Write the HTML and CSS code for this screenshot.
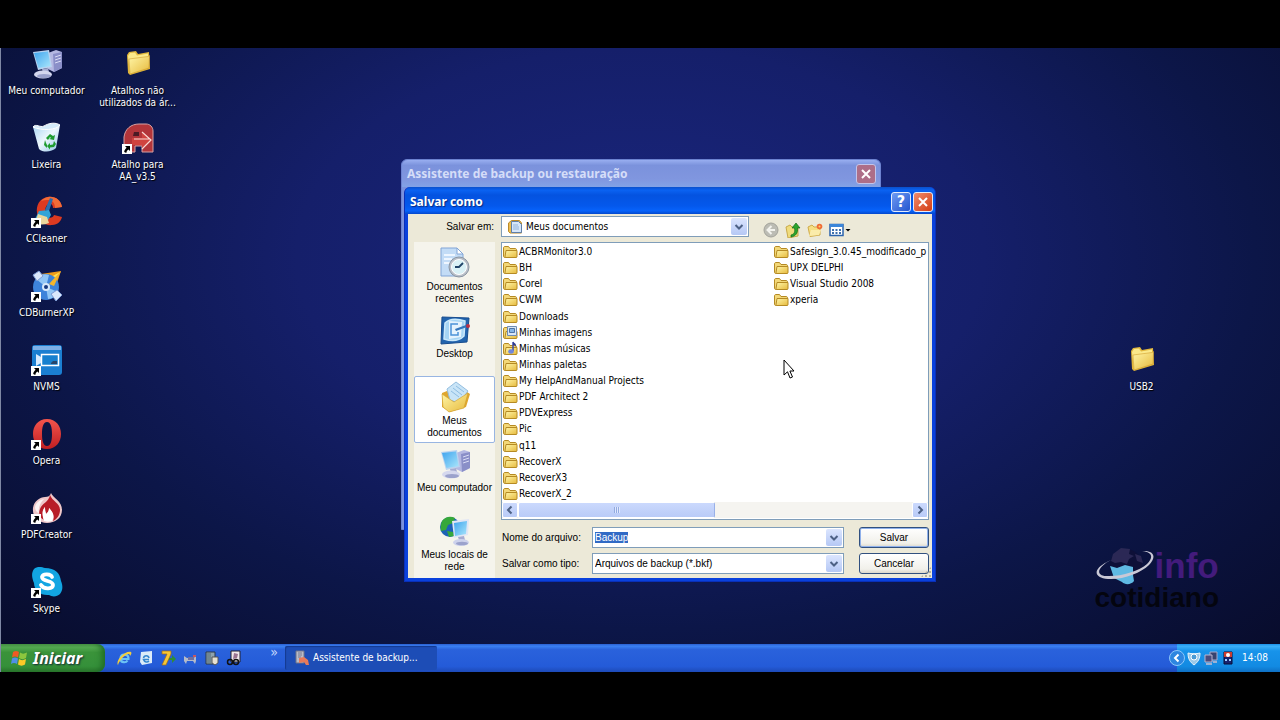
FILE: index.html
```html
<!DOCTYPE html>
<html lang="pt-BR">
<head>
    <meta charset="UTF-8">
    <meta name="viewport" content="width=device-width, initial-scale=1.0">
    <title>Salvar como</title>
    <link rel="stylesheet" href="styles.css">
</head>
<body>
    <svg class="sprite" aria-hidden="true">
        <defs>
            <linearGradient id="gFolder" x1="0" y1="0" x2="1" y2="1">
                <stop offset="0" stop-color="#fff6a8"/>
                <stop offset="1" stop-color="#e6b93c"/>
            </linearGradient>
            <linearGradient id="gScreen" x1="0" y1="0" x2="1" y2="1">
                <stop offset="0" stop-color="#3fa4ee"/>
                <stop offset="1" stop-color="#a9e6fb"/>
            </linearGradient>
            <linearGradient id="gRed" x1="0" y1="0" x2="0" y2="1">
                <stop offset="0" stop-color="#f4554d"/>
                <stop offset="1" stop-color="#c01f22"/>
            </linearGradient>
            <linearGradient id="gBin" x1="0" y1="0" x2="1" y2="1">
                <stop offset="0" stop-color="#a9d5f2"/>
                <stop offset="0.5" stop-color="#eef8fd"/>
                <stop offset="1" stop-color="#8cc0e6"/>
            </linearGradient>
        </defs>

        <symbol id="shortcut" viewBox="0 0 10 10">
            <path d="M0 0h10v10H0z" fill="#fff"/>
            <path d="M3 2h5v5L6.400 5.500C5 6.500 4.500 7.500 4.300 9L2.200 8C2.300 6.300 3.200 5 4.600 3.700z" fill="#000"/>
        </symbol>

        <symbol id="computer" viewBox="0 0 32 32">
            <path d="M17 5l8-3 6 2v16l-8 4-6-3z" fill="#b4b8e2"/>
            <path d="M22 6l9-2v16l-8 4z" fill="#8a8fc8"/>
            <path d="M24 9l6-2M24 12l6-2M24 15l6-2" stroke="#d9dcf5"/>
            <path d="M2 4l16-2 3 17-14 3z" fill="#b9d3f0"/>
            <path d="M3 5l14-1.500 2.500 14.500-12 2z" fill="url(#gScreen)"/>
            <path d="M11 21l6-1 1 4-6 1z" fill="#a6abd1"/>
            <ellipse cx="12" cy="26.500" rx="9" ry="4" fill="#d5d8ee"/>
            <ellipse cx="13" cy="28" rx="7" ry="2" fill="#9ba2cc"/>
        </symbol>

        <symbol id="folder-big" viewBox="0 0 32 32">
            <path d="M5 7l2-3 7-1 2 3 11-2 1 17-20 6-2-2z" fill="#e0b63b"/>
            <path d="M6 8l2-3 5-.500 2 3 11-2v14L8 25z" fill="#fbe98a"/>
            <path d="M7 11l19-2.500 1.500-1-.500 12.500L8 26z" fill="url(#gFolder)" stroke="#d1a02f" stroke-width=".6"/>
        </symbol>

        <symbol id="bin" viewBox="0 0 32 32">
            <path d="M2 5l11 2 16-4-4 23c-4 4-13 5-17 1z" fill="url(#gBin)"/>
            <path d="M2 5c3-4 7 1 11-1 5-3 11-4 16-1-3 5-18 6-27 2z" fill="#d5ecfa" stroke="#fff" stroke-width="1"/>
            <path d="M15 16l4-4 3 2 2-1-1 5-5-1 2-1-1-1-2 3zM23 19l2 3-2 3-4 .500v2l-3-3.500 3-3v2l3-.500zM14 18l-1 5 3 3v-3l-1-2z" fill="#1f9c2f"/>
        </symbol>

        <symbol id="aa" viewBox="0 0 32 32">
            <path d="M2 30V15C3 7 9 2 17 2h7c4 0 7 3 7 7v21H20v-6h-7v6z" fill="#b2353a" stroke="#d7a1a3"/>
            <path d="M10 16h10v-6l10 8-10 9v-4H10z" fill="#d0433f"/>
            <path d="M12 17h16M20 10l9 8-9 9" fill="none" stroke="#f9d9d4" stroke-width="1.200"/>
            <path d="M12 10h5v4h-6z" fill="#4b1a24"/>
        </symbol>

        <symbol id="ccleaner" viewBox="0 0 32 32">
            <path d="M31 11C30 4 24 0 17 1 8 2 5 10 6 17c1 8 8 13 15 12 6 0 9-4 10-8l-8-2c-1 3-5 4-7 1-3-4-2-11 2-12 2-1 4 1 4 4z" fill="#dd3a21"/>
            <path d="M31 11C30 4 24 0 17 1c-3 .500-5 2-7 4 6-2 14-2 14 7z" fill="#f26b37"/>
            <path d="M19 2l3 1-4 12-4-1z" fill="#2c6dad"/>
            <path d="M8 15l10-1 2 5-3 5-9 3-4-4z" fill="#32a4d8"/>
            <path d="M7 18l9 3 2 6c-5 2-10 2-14 0z" fill="#ead79d"/>
        </symbol>

        <symbol id="cdburner" viewBox="0 0 32 32">
            <path d="M10 4l20-3-6 18z" fill="#ef9b1a"/>
            <path d="M18 8l11-6-7 11z" fill="#ffe054"/>
            <circle cx="15" cy="17" r="13" fill="#3d83da"/>
            <path d="M15 17L5 9c3-4 8-6 13-4zM15 17l12 5c-2 4-6 7-10 7z" fill="#91c6f5"/>
            <circle cx="15" cy="17" r="4" fill="#d8e9fa"/>
            <circle cx="15" cy="17" r="2" fill="#173a80"/>
            <path d="M2 5l6-4 4 5-6 5zM20 24l6-4 5 5-6 6z" fill="#dbe8fb" stroke="#7e9bd4"/>
            <path d="M18 14L30 1l-7 15z" fill="#f5b52c"/>
        </symbol>

        <symbol id="nvms" viewBox="0 0 32 32">
            <rect x="1" y="1" width="30" height="30" rx="3" fill="#1b7fd1"/>
            <path d="M2 2h28v4H2z" fill="#7eb0e6"/>
            <path d="M10.500 10.500h17v11h-17z" fill="#1680cf" stroke="#fff" stroke-width="1.500"/>
            <path d="M5 10l5 3v6l-5 3z" fill="#d9ecff"/>
            <path d="M20 19l2-2h4v3h-6z" fill="#27466b"/>
        </symbol>

        <symbol id="opera" viewBox="0 0 32 32">
            <path fill-rule="evenodd" d="M16 1c9 0 14 7 14 15s-5 15-14 15S2 24 2 16 7 1 16 1zm0 3c-4 0-5 6-5 12s1 12 5 12 5-6 5-12-1-12-5-12z" fill="url(#gRed)"/>
        </symbol>

        <symbol id="pdfcreator" viewBox="0 0 32 32">
            <path d="M20 1c2 5 11 8 11 17 0 8-7 13-15 13S1 25 2 16C3 9 9 5 14 5c3 0 5-1 6-4z" fill="#eec7c9"/>
            <path d="M19 3c2 6 10 8 10 15 0 5-3 9-7 11 2-6-1-9-4-13 0 3-1 4-3 6-2-4-1-6-1-7-3 3-3 7-1 13-4-2-6-6-4-11C11 11 18 10 19 3z" fill="#b81c27"/>
            <path d="M14 15c0 4 1 5 1 7 2-2 3-3 3-6 4 4 6 8 3 13-3 1-5 1-8 0-2-6-2-10 1-14z" fill="#fff"/>
            <path d="M4 15c1-4 4-7 9-8-4 4-6 9-5 14-2 0-4-3-4-6z" fill="#fbf3f3"/>
        </symbol>

        <symbol id="skype" viewBox="0 0 32 32">
            <path d="M3 3c3-3 8-2 11-1 10 0 15 5 16 13 2 5 2 9-1 13-3 3-8 3-11 1C10 30 3 24 3 17 1 12 0 7 3 3z" fill="#12a5e2"/>
            <path d="M21 11c-1-3-9-4-10 0 0 5 11 3 11 8 0 4-9 5-12 0" fill="none" stroke="#fff" stroke-width="3.800" stroke-linecap="round"/>
        </symbol>

        <symbol id="recent" viewBox="0 0 32 32">
            <path d="M2 1h16l6 6v22H2z" fill="#c3dcf6" stroke="#82a5d6"/>
            <path d="M18 1v6h6z" fill="#fff" stroke="#82a5d6"/>
            <path d="M5 8h11M5 12h8M5 16h6" stroke="#eef6ff" stroke-width="2"/>
            <circle cx="20" cy="20" r="10" fill="#b9bfc8" stroke="#8b96a2"/>
            <circle cx="20" cy="20" r="7.500" fill="#d9f1f6" stroke="#fff"/>
            <path d="M24 16l-4 4h-4" fill="none" stroke="#204468" stroke-width="1.800"/>
        </symbol>

        <symbol id="desktop" viewBox="0 0 32 32">
            <path d="M3 3l27 1-2 24-26 2z" fill="#2264ae" stroke="#174c8e"/>
            <path d="M6 9c5-5 14-4 20-2l-1 15c-6 6-14 5-20 3z" fill="#a5d4f4" stroke="#c9e8fb" stroke-width="1.500"/>
            <path d="M10 7l13 1-1 15-12 2z" fill="#e5f3fd"/>
            <path d="M19 10h-7v11h7v-3" fill="none" stroke="#4b93d8" stroke-width="1.500"/>
            <path d="M16 15l11-4 1 2-11 4z" fill="#3476bb"/>
            <circle cx="29" cy="12" r="2" fill="#ba3145"/>
        </symbol>

        <symbol id="mydocs" viewBox="0 0 32 32">
            <path d="M3 12l5-2 14-3 9 6-4 13-16 5-8-5z" fill="#dfa62e"/>
            <path d="M8 8L17 1l12 9-9 12-9-3z" fill="#c8e4f7" stroke="#93bedf"/>
            <path d="M14 7l9 7M12 10l8 6M17 5l8 6" stroke="#8ebde2"/>
            <path d="M3 13l12 8 14-9-4 15-15 4-6-5z" fill="url(#gFolder)" stroke="#d09d2a" stroke-width=".6"/>
        </symbol>

        <symbol id="network" viewBox="0 0 32 32">
            <circle cx="11" cy="12" r="10" fill="#1c62b6"/>
            <path d="M3 6c4-5 9-5 13-3l-2 5-5 2-2 5-5 1c-1-4 0-7 1-10zM8 16l6 1 1 4-5 1z" fill="#36a83a"/>
            <path d="M13 6l17-2-1 16-14 3z" fill="#e1e6f5"/>
            <path d="M15 8l13-2-1 13-11 2z" fill="url(#gScreen)"/>
            <path d="M19 22l6-1 1 4h-6z" fill="#a6abd1"/>
            <ellipse cx="22" cy="27.500" rx="8" ry="3.500" fill="#cdd2ec"/>
            <ellipse cx="23" cy="28.500" rx="6" ry="1.800" fill="#9ba2cc"/>
        </symbol>

        <symbol id="folder" viewBox="0 0 16 16">
            <path d="M.500 4c0-1 .500-1.500 1.500-1.500h3.500l1.500 2h5c1 0 1.500.500 1.500 1.500v6.500c0 .700-.500 1-1 1H2c-1 0-1.500-.500-1.500-1.500z" fill="#f3d878" stroke="#b58a24"/>
            <path d="M3 6.500h11v6c0 .700-.500 1-1 1H3c-.700 0-1-.500-1-1z" fill="url(#gFolder)" stroke="#b58a24"/>
        </symbol>

        <symbol id="folder-pictures" viewBox="0 0 16 16">
            <use href="#folder"/>
            <path d="M4.500 1.500h9v9h-9z" fill="#d8e6f6" stroke="#6f8cb4"/>
            <path d="M6.500 3.500h5v4h-5z" fill="#86b6e8" stroke="#4f74a5"/>
        </symbol>

        <symbol id="folder-music" viewBox="0 0 16 16">
            <use href="#folder"/>
            <path d="M10 1v9" stroke="#3c4ba8" stroke-width="1.500"/>
            <path d="M10 0c0 2 4 2 3 6-1-2-2-2-3-2z" fill="#2f3a8e"/>
            <ellipse cx="8" cy="10.500" rx="2.800" ry="2.200" fill="#7087dc"/>
        </symbol>

        <symbol id="docs-small" viewBox="0 0 16 16">
            <path d="M1.500 4l3-2.500h8l2 2.500v10H3l-1.500-1.500z" fill="#eebe50" stroke="#bb8a2a"/>
            <path d="M4.500 2.500h7l3 3v8h-10z" fill="#d6e6f9" stroke="#5f7fa9"/>
            <path d="M6 6h5M6 8h6M6 10h6" stroke="#93b4dc"/>
        </symbol>
    </svg>

    <main class="desktop">
        <div class="icon-grid">
            <a class="shortcut" href="#"><svg class="icon"><use href="#computer"/></svg><span>Meu computador</span></a>
            <a class="shortcut" href="#"><svg class="icon"><use href="#bin"/></svg><span>Lixeira</span></a>
            <a class="shortcut" href="#"><svg class="icon"><use href="#ccleaner"/></svg><svg class="arrow"><use href="#shortcut"/></svg><span>CCleaner</span></a>
            <a class="shortcut" href="#"><svg class="icon"><use href="#cdburner"/></svg><svg class="arrow"><use href="#shortcut"/></svg><span>CDBurnerXP</span></a>
            <a class="shortcut" href="#"><svg class="icon"><use href="#nvms"/></svg><svg class="arrow"><use href="#shortcut"/></svg><span>NVMS</span></a>
            <a class="shortcut" href="#"><svg class="icon"><use href="#opera"/></svg><svg class="arrow"><use href="#shortcut"/></svg><span>Opera</span></a>
            <a class="shortcut" href="#"><svg class="icon"><use href="#pdfcreator"/></svg><svg class="arrow"><use href="#shortcut"/></svg><span>PDFCreator</span></a>
            <a class="shortcut" href="#"><svg class="icon"><use href="#skype"/></svg><svg class="arrow"><use href="#shortcut"/></svg><span>Skype</span></a>
            <a class="shortcut" href="#"><svg class="icon"><use href="#folder-big"/></svg><span>Atalhos não<br>utilizados da ár...</span></a>
            <a class="shortcut" href="#"><svg class="icon"><use href="#aa"/></svg><svg class="arrow"><use href="#shortcut"/></svg><span>Atalho para<br>AA_v3.5</span></a>
        </div>

        <a class="shortcut usb" href="#"><svg class="icon"><use href="#folder-big"/></svg><span>USB2</span></a>

        <section class="window wizard">
            <header class="titlebar">
                <h2>Assistente de backup ou restauração</h2>
                <button class="win-btn close" aria-label="Fechar assistente"><svg viewBox="0 0 18 18"><path d="M5 5l8 8M13 5l-8 8"/></svg></button>
            </header>
        </section>

        <section class="window dialog">
            <header class="titlebar">
                <h1>Salvar como</h1>
                <button class="win-btn help" aria-label="Ajuda">?</button>
                <button class="win-btn close" aria-label="Fechar"><svg viewBox="0 0 18 18"><path d="M5 5l8 8M13 5l-8 8"/></svg></button>
            </header>
            <form class="dialog-body" onsubmit="return false">
                <div class="look-in">
                    <label for="folderSelect">Salvar em:</label>
                    <div class="combo combo-folder">
                        <svg class="combo-icon"><use href="#docs-small"/></svg>
                        <select id="folderSelect"><option>Meus documentos</option></select>
                        <span class="combo-arrow"><svg viewBox="0 0 10 10"><path d="M1.500 3L5 6.500 8.500 3"/></svg></span>
                    </div>
                    <div class="tools">
                        <button type="button" aria-label="Voltar"><svg viewBox="0 0 16 16"><circle cx="8" cy="8" r="7" fill="#bcbcb4" stroke="#a3a39b"/><path d="M8.500 4L4.500 8l4 4M5 8h7" fill="none" stroke="#f3f3ee" stroke-width="2"/></svg></button>
                        <button type="button" aria-label="Um nível acima"><svg viewBox="0 0 16 16"><path d="M1 5l4-2 2 2h6v9l-10 2z" fill="#f0dc7c" stroke="#c8a94a"/><path d="M6 13c4-1 4-4 3.500-7H7l4-5 4 5h-2.500c.500 5-1.500 8-6.500 9z" fill="#2ba52d" stroke="#146b1c" stroke-width=".7"/></svg></button>
                        <button type="button" aria-label="Criar nova pasta"><svg viewBox="0 0 16 16"><path d="M1 5l4-2 2 2h6v8l-10 1.500z" fill="#f6df83" stroke="#cfab49"/><path d="M2 14l2-6h10l-2 5z" fill="#fbecaa"/><circle cx="12.500" cy="4.500" r="2.800" fill="#f06c35"/><circle cx="12.500" cy="4.500" r="1" fill="#ffd06a"/></svg></button>
                        <button type="button" class="views" aria-label="Menu Exibir"><svg viewBox="0 0 22 16"><path d="M1 2.500h13v11H1z" fill="#fff" stroke="#2a63ad" stroke-width="1.500"/><path d="M1 2h13v3H1z" fill="#3b86d9"/><path d="M3 8h2M6.500 8h2M10 8h2M3 11h2M6.500 11h2M10 11h2" stroke="#3e70ad" stroke-width="2"/><path d="M16.500 7h5L19 9.500z" fill="#000"/></svg></button>
                    </div>
                </div>

                <nav class="places">
                    <button type="button"><svg class="icon"><use href="#recent"/></svg><span>Documentos recentes</span></button>
                    <button type="button"><svg class="icon"><use href="#desktop"/></svg><span>Desktop</span></button>
                    <button type="button" class="active"><svg class="icon"><use href="#mydocs"/></svg><span>Meus documentos</span></button>
                    <button type="button"><svg class="icon"><use href="#computer"/></svg><span>Meu computador</span></button>
                    <button type="button"><svg class="icon"><use href="#network"/></svg><span>Meus locais de rede</span></button>
                </nav>

                <div class="file-pane">
                    <ul class="files">
                        <li><svg><use href="#folder"/></svg>ACBRMonitor3.0</li>
                        <li><svg><use href="#folder"/></svg>BH</li>
                        <li><svg><use href="#folder"/></svg>Corel</li>
                        <li><svg><use href="#folder"/></svg>CWM</li>
                        <li><svg><use href="#folder"/></svg>Downloads</li>
                        <li><svg><use href="#folder-pictures"/></svg>Minhas imagens</li>
                        <li><svg><use href="#folder-music"/></svg>Minhas músicas</li>
                        <li><svg><use href="#folder"/></svg>Minhas paletas</li>
                        <li><svg><use href="#folder"/></svg>My HelpAndManual Projects</li>
                        <li><svg><use href="#folder"/></svg>PDF Architect 2</li>
                        <li><svg><use href="#folder"/></svg>PDVExpress</li>
                        <li><svg><use href="#folder"/></svg>Pic</li>
                        <li><svg><use href="#folder"/></svg>q11</li>
                        <li><svg><use href="#folder"/></svg>RecoverX</li>
                        <li><svg><use href="#folder"/></svg>RecoverX3</li>
                        <li><svg><use href="#folder"/></svg>RecoverX_2</li>
                        <li><svg><use href="#folder"/></svg>Safesign_3.0.45_modificado_p</li>
                        <li><svg><use href="#folder"/></svg>UPX DELPHI</li>
                        <li><svg><use href="#folder"/></svg>Visual Studio 2008</li>
                        <li><svg><use href="#folder"/></svg>xperia</li>
                    </ul>
                    <div class="scrollbar">
                        <button type="button" aria-label="Rolar para a esquerda"><svg viewBox="0 0 10 10"><path d="M6.500 1.500L3 5l3.500 3.500"/></svg></button>
                        <div class="track"><div class="thumb"></div></div>
                        <button type="button" aria-label="Rolar para a direita"><svg viewBox="0 0 10 10"><path d="M3.500 1.500L7 5 3.500 8.500"/></svg></button>
                    </div>
                </div>

                <div class="fields">
                    <label for="fileName">Nome do arquivo:</label>
                    <div class="combo">
                        <input type="text" id="fileName" value="Backup" autocomplete="off" spellcheck="false">
                        <span class="combo-arrow"><svg viewBox="0 0 10 10"><path d="M1.500 3L5 6.500 8.500 3"/></svg></span>
                    </div>
                    <button type="submit" class="btn btn-default">Salvar</button>
                    <label for="fileType">Salvar como tipo:</label>
                    <div class="combo">
                        <select id="fileType"><option>Arquivos de backup (*.bkf)</option></select>
                        <span class="combo-arrow"><svg viewBox="0 0 10 10"><path d="M1.500 3L5 6.500 8.500 3"/></svg></span>
                    </div>
                    <button type="button" class="btn">Cancelar</button>
                </div>
                <span class="grip"></span>
            </form>
        </section>

        <svg class="cursor" viewBox="0 0 12 20"><path d="M1 1v15l3.500-3.200L7 19l2.500-1-2.600-6H11z" fill="#fff" stroke="#000"/></svg>

        <div class="watermark">
            <div class="wm-top">
                <svg viewBox="0 0 60 40">
                    <circle cx="31" cy="19" r="16" fill="#0e1038"/>
                    <path d="M18 8l8-6 9 1-1 5 5 2-5 3-2 5-6-2-6 1-4-2zM40 8l6 2 2 7-6-2z" fill="#2b2855"/>
                    <path d="M15 20l7 2 8-3 8 2v8l1 6c-3 4-9 4-12 1l-8-4z" fill="#5fb9e3"/>
                    <path d="M47 5c12-1 15 6 7 14S28 34 13 33C-2 32-2 23 12 16l4-2C4 20-1 29 11 30c14 1 33-5 41-12 7-7 5-12-5-13z" fill="#c9c8d6"/>
                </svg>
                <span>info</span>
            </div>
            <div class="wm-bottom">cotidiano</div>
        </div>
    </main>

    <footer class="taskbar">
        <button class="start">
            <svg viewBox="0 0 20 18"><path d="M3 3c2-1.500 4-1.500 6 0L8 8.500c-2-1.500-4-1.500-6 0z" fill="#ef5a24"/><path d="M10 3.500c2 1.500 4 1.500 7 0L16 9c-2 1.500-5 1.500-7 0z" fill="#8cc63e"/><path d="M2 9.500c2-1.500 4-1.500 6 0L7 15c-2-1.500-4-1.500-6 0z" fill="#4f8fe8"/><path d="M9 10c2 1.500 4 1.500 7 0l-1 5.500c-2 1.500-5 1.500-7 0z" fill="#fbc927"/></svg>
            Iniciar
        </button>
        <div class="quick-launch">
            <button aria-label="Internet Explorer"><svg viewBox="0 0 16 16"><path d="M13.500 9H4.500c.500 4 5.500 4 7 1.500" fill="none" stroke="#6cc3f5" stroke-width="2.200"/><path d="M4.500 8C5 3.500 12 3.500 12.500 8" fill="none" stroke="#6cc3f5" stroke-width="2.200"/><path d="M2 15C-1 11 9 0 15 2c1 1 0 3-1 4 0-6-10 2-12 9z" fill="#f4ce3d"/></svg></button>
            <button aria-label="Outlook Express"><svg viewBox="0 0 16 16"><path d="M3 2l11-1v12L4 15l-2-3z" fill="#dcecf8"/><path d="M11 9.500H5.500c1 3 4 3 5.500 1.500M5.500 8c.500-3 5-3 5.500 0" fill="none" stroke="#3687cf" stroke-width="1.600"/></svg></button>
            <button aria-label="7"><svg viewBox="0 0 16 16"><path d="M2 1h9v3L6 15H2L7 4H2z" fill="#f5c637" stroke="#a36a12" stroke-width=".7"/><path d="M9 8h3V5l4 4-4 4v-3H9z" fill="#2f8c3a"/></svg></button>
            <button aria-label="Rede"><svg viewBox="0 0 16 16"><path d="M2 6l3 2h7l2-3v6l-1 3-2-3H5l-1 3-2-3z" fill="#b4bac9"/><path d="M6 7h6v3H6z" fill="#6f6fa0"/><path d="M11 5h3v2h-3z" fill="#c65760"/></svg></button>
            <button aria-label="Documento"><svg viewBox="0 0 16 16"><path d="M2 2h9v12H2z" fill="#8fa3ad" stroke="#2c3a4b"/><path d="M4 3v10M6 3v10" stroke="#546a75"/><path d="M8 7h6v6l-3 2-3-2z" fill="#e6e1d2" stroke="#555"/></svg></button>
            <button aria-label="Captura"><svg viewBox="0 0 16 16"><path d="M5 1h9v11H5z" fill="#f1e9ea" stroke="#23202e"/><path d="M8 3l4 1-1 4-4 1z" fill="#9a7490"/><circle cx="4" cy="12" r="2.500" fill="none" stroke="#111" stroke-width="1.500"/><circle cx="10" cy="12" r="2.500" fill="none" stroke="#111" stroke-width="1.500"/></svg></button>
            <span class="more">»</span>
        </div>
        <button class="task">
            <svg viewBox="0 0 16 16"><path d="M2 1h8v12H2z" fill="#b9bbc6" stroke="#6d7288"/><path d="M4 3h4M4 5h4M4 7h3" stroke="#767b92"/><path d="M5 8l5-1 4 3 1 5h-3l-2-3-5 1z" fill="#e67a5b"/></svg>
            <span>Assistente de backup...</span>
        </button>
        <div class="tray">
            <button class="tray-toggle" aria-label="Mostrar ícones ocultos"><svg viewBox="0 0 16 16"><circle cx="8" cy="8" r="7.500" fill="#2d86e0" stroke="#8cc7fa"/><path d="M9.500 4.500L6 8l3.500 3.500" fill="none" stroke="#fff" stroke-width="2"/></svg></button>
            <svg viewBox="0 0 16 16"><path d="M2 3c4 1 8 1 12 0 0 6-2 9-6 12-4-3-6-6-6-12z" fill="#9cc9e8" stroke="#e7f4fb"/><circle cx="8" cy="7" r="3" fill="#4a9bd5" stroke="#fff"/></svg>
            <svg viewBox="0 0 16 16"><path d="M7 2h7v8H7z" fill="#38436e" stroke="#a9a9c9"/><path d="M2 5h7v7H2z" fill="#4a4c7d" stroke="#b8b5cf"/><path d="M3 14h6M10 12h4" stroke="#c8bfd0" stroke-width="1.500"/></svg>
            <svg viewBox="0 0 16 16"><path d="M4 2h8v12H4z" fill="#18226f" stroke="#0a0d35"/><path d="M4 2h8v5H4z" fill="#c83c2e"/><circle cx="8" cy="5" r="2" fill="#fff"/><path d="M5 10h2M9 10h2" stroke="#9fd0ff" stroke-width="2"/></svg>
            <time>14:08</time>
        </div>
    </footer>

    <script>
        // o nome sugerido abre selecionado
        const fileName = document.getElementById('fileName');
        fileName.focus();
        fileName.select();
    </script>
</body>
</html>
```
FILE: styles.css
```css
* {
    margin: 0;
    padding: 0;
    box-sizing: border-box;
}

body {
    font-family: Tahoma, 'DejaVu Sans Condensed', sans-serif;
    font-size: 10px;
    line-height: 12px;
    background: #000;
    min-height: 100vh;
    padding: 48px 0;
    display: flex;
    flex-direction: column;
    overflow: hidden;
}

button,
input,
select {
    font: inherit;
    color: inherit;
    border: none;
    background: none;
    outline: none;
}

.sprite {
    position: absolute;
    width: 0;
    height: 0;
}

/* area de trabalho */
.desktop {
    flex: 1;
    position: relative;
    border-left: 1px solid #7f88a4;
    background: radial-gradient(ellipse at 50% 35%, #1a267e 0%, #151f6a 38%, #0c1648 68%, #080c2c 100%);
}

.icon-grid {
    display: grid;
    grid-auto-flow: column;
    grid-template-rows: repeat(8, 74px);
    grid-auto-columns: 91px;
    justify-content: start;
}

.shortcut {
    position: relative;
    display: flex;
    flex-direction: column;
    align-items: center;
    gap: 5px;
    color: #fff;
    text-align: center;
    text-decoration: none;
    text-shadow: 1px 1px 1px #000;
}

.icon {
    width: 32px;
    height: 32px;
}

.arrow {
    position: absolute;
    left: 30px;
    top: 22px;
    width: 10px;
    height: 10px;
}

.usb {
    position: absolute;
    right: 93px;
    top: 296px;
    width: 91px;
}

/* janelas */
.window {
    position: absolute;
    display: flex;
    flex-direction: column;
    border-radius: 6px 6px 0 0;
}

.wizard {
    left: 400px;
    top: 111px;
    width: 480px;
    height: 371px;
    background: #7b91dd;
    border: 1px solid #6c82d0;
}

.dialog {
    left: 403px;
    top: 139px;
    width: 532px;
    height: 395px;
    padding: 0 3px 3px;
    background: #0a41dc;
    border: 1px solid #0a30b8;
    border-top: none;
}

.titlebar {
    display: flex;
    align-items: center;
    gap: 2px;
    height: 27px;
    padding: 2px 4px 2px 5px;
    border-radius: 6px 6px 0 0;
    color: #fff;
}

.wizard .titlebar {
    background: linear-gradient(#98aef0, #7b92dc 20%, #8096df 70%, #82a2e6);
    color: #d5ddf8;
}

.dialog .titlebar {
    margin: 0 -3px;
    background: linear-gradient(#0a50cc, #0a62f2 12%, #0453e0 30%, #0458ec 70%, #0763fb 88%, #0448cc);
    padding: 5px 2px 2px 5px;
    text-shadow: 1px 1px 1px #0a2a80;
}

.titlebar h1,
.titlebar h2 {
    flex: 1;
    font-family: 'Trebuchet MS', 'Noto Sans', sans-serif;
    font-size: 12px;
    line-height: 16px;
    font-weight: bold;
}

.win-btn {
    width: 20px;
    height: 20px;
    border: 1px solid #e3ebfb;
    border-radius: 3px;
    background: linear-gradient(135deg, #6f9bf3, #2455cf);
    color: #fff;
    font-size: 16px;
    line-height: 18px;
    font-weight: bold;
}

.win-btn svg {
    display: block;
    width: 18px;
    height: 18px;
    fill: none;
    stroke: #fff;
    stroke-width: 2;
}

.close {
    background: linear-gradient(135deg, #f08b6c, #d33d14);
}

.wizard .close {
    background: #ad6e88;
    border-color: #c2c4ea;
}

/* corpo do dialogo */
.dialog-body {
    flex: 1;
    position: relative;
    display: grid;
    grid-template-columns: 81px minmax(0, 1fr);
    grid-template-rows: 21px 1fr 53px;
    column-gap: 6px;
    row-gap: 5px;
    padding: 2px 3px 0 6px;
    background: #ece9d8;
    color: #000;
}

.dialog-body label,
.places,
.fields {
    font-family: 'Microsoft Sans Serif', 'Liberation Sans', sans-serif;
}

.look-in {
    grid-column: 1 / 3;
    display: flex;
    align-items: center;
}

.look-in label {
    width: 87px;
    padding-right: 7px;
    text-align: right;
}

.combo {
    position: relative;
    display: flex;
    align-items: center;
    height: 21px;
    padding: 1px;
    border: 1px solid #7f9db9;
    background: #fff;
}

.combo-folder {
    width: 248px;
}

.combo-icon {
    width: 16px;
    height: 16px;
    margin-left: 4px;
}

.combo input,
.combo select {
    flex: 1;
    min-width: 0;
    height: 15px;
    padding: 0 1px;
    appearance: none;
}

.combo-folder select {
    padding-left: 3px;
}

.combo input::selection {
    background: #316ac5;
    color: #fff;
}

.combo-arrow {
    display: grid;
    place-items: center;
    width: 16px;
    height: 17px;
    border-radius: 2px;
    background: linear-gradient(#dbe5fe, #b5c8f5);
    pointer-events: none;
}

.combo-arrow svg,
.scrollbar svg {
    width: 10px;
    height: 10px;
    fill: none;
    stroke: #4d6185;
    stroke-width: 2;
}

.tools {
    display: flex;
    gap: 6px;
    margin-left: 14px;
    padding-top: 6px;
}

.tools svg {
    display: block;
    height: 16px;
}

.tools button {
    width: 16px;
}

.tools .views {
    width: 22px;
}

.places {
    grid-row: 2 / 4;
    display: flex;
    flex-direction: column;
    background: #f5f4ec;
}

.places button {
    display: flex;
    flex-direction: column;
    align-items: center;
    gap: 2px;
    height: 67px;
    padding: 4px 1px 0;
    border: 1px solid transparent;
    border-radius: 2px;
}

.places .active {
    background: #fff;
    border-color: #98b5e2;
}

.file-pane {
    display: flex;
    flex-direction: column;
    min-width: 0;
    padding: 1px 0;
    border: 1px solid #7f9db9;
    background: #fff;
    overflow: hidden;
}

.files {
    flex: 1;
    display: grid;
    grid-auto-flow: column;
    grid-template-rows: repeat(16, 1fr);
    grid-auto-columns: 271px;
    padding-left: 1px;
    list-style: none;
    overflow: hidden;
}

.files li {
    display: flex;
    align-items: center;
    white-space: nowrap;
}

.files svg {
    width: 16px;
    height: 16px;
    flex: none;
}

.scrollbar {
    display: flex;
    height: 16px;
    background: #f5f4f0;
}

.scrollbar button,
.thumb {
    border: 1px solid #fff;
    border-radius: 2px;
    background: linear-gradient(#cbd9fd, #b9cbf7);
}

.scrollbar button {
    display: grid;
    place-items: center;
    width: 16px;
}

.track {
    flex: 1;
}

.thumb {
    display: flex;
    justify-content: center;
    align-items: center;
    width: 50%;
    height: 16px;
    border-right-color: #98b0e8;
}

.thumb::before {
    content: '';
    width: 6px;
    height: 6px;
    background: repeating-linear-gradient(90deg, #93abe0 0 1px, #dfe8ff 1px 2px);
}

.fields {
    display: grid;
    grid-template-columns: 85px 1fr 80px;
    grid-template-rows: 21px 21px;
    column-gap: 5px;
    row-gap: 5px;
    align-items: center;
    align-content: start;
    padding: 2px 0 0 1px;
}

.btn {
    justify-self: end;
    width: 70px;
    height: 21px;
    border: 1px solid #31507f;
    border-radius: 3px;
    background: linear-gradient(#fff, #f1f0ea 80%, #dcd8cc);
}

.btn-default {
    box-shadow: inset 0 0 0 1px #8fb0ea;
}

.grip {
    position: absolute;
    right: 0;
    bottom: 0;
    width: 12px;
    height: 12px;
    background: radial-gradient(circle at 2px 2px, #b5b19c 1px, transparent 1px) 0 0 / 4px 4px;
    clip-path: polygon(100% 0, 100% 100%, 0 100%);
}

.cursor {
    position: absolute;
    left: 782px;
    top: 311px;
    width: 12px;
    height: 20px;
}

/* marca do canal */
.watermark {
    position: absolute;
    right: 61px;
    bottom: 34px;
    font-family: 'Liberation Sans', sans-serif;
    font-weight: bold;
}

.wm-top {
    display: flex;
    align-items: center;
    color: #431b7c;
    font-size: 35px;
    line-height: 38px;
}

.wm-top svg {
    width: 60px;
    height: 40px;
}

.wm-bottom {
    color: #04050f;
    font-size: 28px;
    line-height: 24px;
}

/* barra de tarefas */
.taskbar {
    display: flex;
    height: 28px;
    border-left: 1px solid #7f88a4;
    background: linear-gradient(#2a5fd0, #3a80f2 8%, #2a62dc 20%, #245bd8 80%, #1d4ab8);
    color: #fff;
}

.start {
    display: flex;
    align-items: center;
    gap: 3px;
    width: 104px;
    padding-left: 9px;
    border-radius: 0 8px 8px 0;
    background: linear-gradient(#4f9a4b, #55ab52 12%, #3a933a 30%, #35903a 80%, #2a762c);
    box-shadow: inset -5px 0 6px -2px #1f6b25;
    font-family: 'Noto Sans', sans-serif;
    font-size: 16px;
    line-height: 20px;
    font-style: italic;
    font-weight: bold;
    text-shadow: 1px 1px 2px #123;
}

.start svg {
    width: 20px;
    height: 18px;
}

.quick-launch {
    display: flex;
    align-items: center;
    gap: 6px;
    width: 180px;
    padding-left: 11px;
}

.quick-launch button {
    width: 16px;
    height: 16px;
}

.quick-launch svg,
.tray svg,
.task svg {
    display: block;
    width: 16px;
    height: 16px;
}

.more {
    flex: 1;
    align-self: flex-start;
    padding: 2px 7px;
    color: #c5d7fb;
    font-size: 14px;
    text-align: right;
}

.task {
    display: flex;
    align-items: center;
    gap: 3px;
    width: 152px;
    margin: 2px 0;
    padding: 0 9px;
    border-radius: 2px;
    background: #1d4db6;
    box-shadow: inset 1px 1px 1px #153a90;
}

.tray {
    display: flex;
    align-items: center;
    gap: 1px;
    margin-left: auto;
    padding-right: 12px;
    background: linear-gradient(#1a8fe6, #3bb0f8 8%, #1793ea 25%, #128ae2 80%, #0f70c4);
}

.tray-toggle {
    margin-left: -8px;
}

.tray time {
    padding-left: 5px;
}
```
